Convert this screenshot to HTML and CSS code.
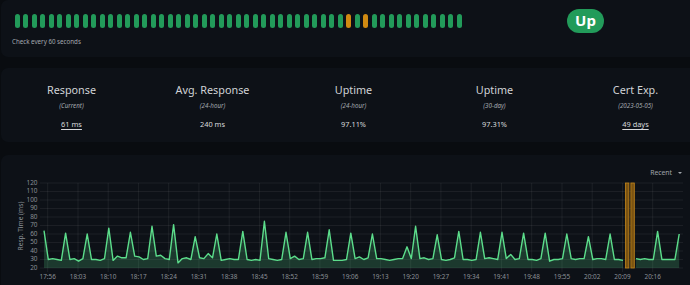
FILE: index.html
```html
<!DOCTYPE html>
<html lang="en">
<head>
    <meta charset="UTF-8">
    <meta name="viewport" content="width=device-width, initial-scale=1.0">
    <title>Monitor details</title>
    <link rel="stylesheet" href="styles.css">
</head>
<body>
    <div class="page">
        <div class="shadow-box status-box">
            <div class="beat-col">
                <div class="hp-bar" id="hpBar"></div>
                <div class="check-info">Check every 60 seconds</div>
            </div>
            <div class="badge-col">
                <span class="badge">Up</span>
            </div>
        </div>

        <div class="shadow-box stats-box">
            <div class="stat">
                <h4>Response</h4>
                <p class="stat-sub">(Current)</p>
                <span class="stat-value link">61 ms</span>
            </div>
            <div class="stat">
                <h4>Avg. Response</h4>
                <p class="stat-sub">(24-hour)</p>
                <span class="stat-value">240 ms</span>
            </div>
            <div class="stat">
                <h4>Uptime</h4>
                <p class="stat-sub">(24-hour)</p>
                <span class="stat-value">97.11%</span>
            </div>
            <div class="stat">
                <h4>Uptime</h4>
                <p class="stat-sub">(30-day)</p>
                <span class="stat-value">97.31%</span>
            </div>
            <div class="stat">
                <h4>Cert Exp.</h4>
                <p class="stat-sub">(2023-05-05)</p>
                <span class="stat-value link">49 days</span>
            </div>
        </div>

        <div class="shadow-box chart-box">
            <div class="chart-header">
                <span class="period">Recent <span class="caret"></span></span>
            </div>
            <svg id="chart" class="chart" width="705" height="110" viewBox="1 178 705 110"></svg>
        </div>
    </div>

    <script>
        // heartbeat bar
        const hpBar = document.getElementById('hpBar');
        for (let i = 0; i < 53; i++) {
            const beat = document.createElement('div');
            beat.className = (i === 39 || i === 41) ? 'beat pending' : 'beat';
            hpBar.appendChild(beat);
        }

        // response times, one per minute from 17:55
        const data = [
            64, 30, 31, 30, 29, 61, 30, 31, 28, 31,
            60, 30, 30, 29, 31, 67, 29, 34, 32, 32,
            62, 34, 33, 30, 31, 69, 34, 35, 31, 30,
            71, 26, 31, 32, 30, 57, 32, 31, 37, 32,
            60, 29, 30, 31, 30, 30, 63, 30, 29, 30,
            29, 75, 31, 30, 29, 30, 62, 31, 34, 30,
            31, 62, 30, 31, 31, 32, 65, 29, 29, 29,
            30, 61, 31, 33, 30, 32, 60, 31, 31, 30,
            29, 30, 31, 31, 45, 31, 69, 31, 32, 30,
            31, 59, 30, 29, 30, 32, 63, 30, 30, 29,
            30, 62, 31, 32, 31, 30, 62, 31, 36, 30,
            31, 61, 30, 30, 29, 31, 61, 28, 30, 30,
            31, 60, 31, 30, 31, 31, 57, 30, 31, 31,
            30, 60, 30, 30, 29, null, null, 31, 30, 31,
            30, 30, 63, 30, 30, 30, 30, 60
        ];

        const plotLeft = 44, plotRight = 683, plotTop = 183, plotBottom = 268;
        const xOf = m => plotLeft + m * 4.321;
        const yOf = v => plotBottom - (v - 20) * 0.85;

        let svg = '';

        for (let v = 20; v <= 120; v += 10) {
            const y = yOf(v).toFixed(1);
            svg += `<line class="grid" x1="40" x2="${plotRight}" y1="${y}" y2="${y}"/>`;
            svg += `<text class="tick" x="37.5" y="${y}" text-anchor="end" dominant-baseline="middle">${v}</text>`;
        }

        const labels = ['17:56', '18:03', '18:10', '18:17', '18:24', '18:31', '18:38', '18:45', '18:52', '18:59',
            '19:06', '19:13', '19:20', '19:27', '19:34', '19:41', '19:48', '19:55', '20:02', '20:09', '20:16'];
        labels.forEach((label, i) => {
            const x = (47.7 + i * 30.25).toFixed(1);
            svg += `<line class="grid" x1="${x}" x2="${x}" y1="${plotTop}" y2="272"/>`;
            svg += `<text class="tick" x="${x}" y="277.5" text-anchor="middle" dominant-baseline="middle">${label}</text>`;
        });

        svg += `<text class="axis-title" x="21" y="226" text-anchor="middle" dominant-baseline="middle" transform="rotate(-90 21 226)">Resp. Time (ms)</text>`;

        // downtime bars
        [135, 136.25].forEach(m => {
            svg += `<rect class="down" x="${(xOf(m) - 1.8).toFixed(1)}" y="${plotTop}" width="3.4" height="${plotBottom - plotTop}"/>`;
        });

        // split into segments at gaps
        const segments = [];
        let current = [];
        data.forEach((v, m) => {
            if (v === null) {
                if (current.length) segments.push(current);
                current = [];
            } else {
                current.push([xOf(m), yOf(v)]);
            }
        });
        if (current.length) segments.push(current);

        segments.forEach(seg => {
            const pts = seg.map(p => p[0].toFixed(1) + ',' + p[1].toFixed(1)).join(' L');
            const first = seg[0][0].toFixed(1);
            const last = seg[seg.length - 1][0].toFixed(1);
            svg += `<path class="area" d="M${first},${plotBottom} L${pts} L${last},${plotBottom} Z"/>`;
            svg += `<path class="line" d="M${pts}"/>`;
        });

        document.getElementById('chart').innerHTML = svg;
    </script>
</body>
</html>
```

FILE: styles.css
```css
* {
    margin: 0;
    padding: 0;
    box-sizing: border-box;
}

body {
    font-family: 'Noto Sans', 'Open Sans', sans-serif;
    background: #090c10;
    overflow: hidden;
    height: 285px;
}

.page {
    width: 707px;
    padding-left: 1px;
}

.shadow-box {
    background: #0d1117;
    border-radius: 7px;
}

/* status row */

.status-box {
    display: grid;
    grid-template-columns: 470px 1fr;
    height: 57px;
}

.beat-col {
    padding: 14px 0 0 12px;
}

.hp-bar {
    display: flex;
    height: 14px;
}

.beat {
    width: 5px;
    height: 14px;
    margin: 0 1.76px;
    border-radius: 3px;
    background: #229b5a;
}

.beat.pending {
    background: #d08a12;
}

.check-info {
    margin: 9px 0 0 -1px;
    font-size: 6.2px;
    line-height: 9px;
    color: #a3a8ae;
}

.badge-col {
    display: flex;
    justify-content: center;
    align-items: flex-start;
    padding: 9px 7px 0 0;
}

.badge {
    display: inline-block;
    height: 24px;
    padding: 0 8px;
    border-radius: 12px;
    background: #229b5a;
    color: #fff;
    font-size: 15px;
    font-weight: 700;
    line-height: 23px;
}

/* stats row */

.stats-box {
    display: grid;
    grid-template-columns: repeat(5, 141px);
    height: 74px;
    margin-top: 11px;
    padding-top: 15px;
    text-align: center;
}

.stat h4 {
    font-size: 10.8px;
    font-weight: 400;
    line-height: 14px;
    color: #d0d3d6;
}

.stat-sub {
    margin-top: 3.5px;
    font-size: 6.2px;
    font-style: italic;
    line-height: 9px;
    color: #a5aab0;
}

.stat-value {
    display: inline-block;
    margin-top: 9px;
    font-size: 7.4px;
    line-height: 11px;
    color: #d7d9dc;
}

.stat-value.link {
    text-decoration: underline;
    text-underline-offset: 1.5px;
}

/* chart */

.chart-box {
    height: 140px;
    margin-top: 13px;
}

.chart-header {
    display: flex;
    justify-content: flex-end;
    height: 23px;
    padding: 12px 25px 0 0;
}

.period {
    display: flex;
    align-items: center;
    font-size: 6.8px;
    line-height: 10px;
    color: #a0a5ab;
}

.caret {
    width: 0;
    height: 0;
    margin-left: 6px;
    border-left: 2.5px solid transparent;
    border-right: 2.5px solid transparent;
    border-top: 2.5px solid #a0a5ab;
}

.chart {
    display: block;
}

.chart .grid {
    stroke: rgba(255, 255, 255, 0.09);
    stroke-width: 0.7;
}

.chart .tick {
    font-size: 6.4px;
    fill: #8b9096;
}

.chart .axis-title {
    font-size: 6.6px;
    fill: #8b9096;
}

.chart .down {
    fill: #7a5312;
    stroke: #c4861a;
    stroke-width: 0.8;
}

.chart .area {
    fill: rgba(92, 221, 139, 0.2);
}

.chart .line {
    fill: none;
    stroke: #5cdd8b;
    stroke-width: 1.4;
    stroke-linejoin: round;
}
```
